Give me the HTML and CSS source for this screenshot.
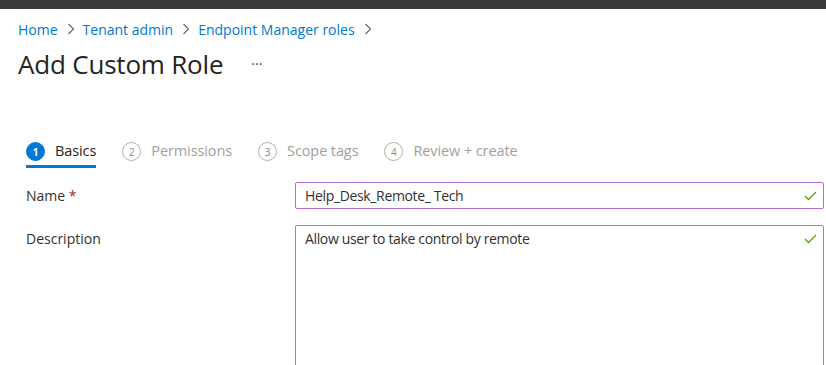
FILE: index.html
```html
<!DOCTYPE html>
<html>
<head>
<meta charset="utf-8">
<link rel="stylesheet" href="styles.css">
</head>
<body>
<div class="topbar"></div>
<main class="page">
  <nav class="crumbs">
    <a>Home</a><span class="sep"><svg width="8" height="12" viewBox="0 0 8 12"><path d="M1.5 1 L6.5 6 L1.5 11" fill="none" stroke="#666" stroke-width="1.1"/></svg></span>
    <a>Tenant admin</a><span class="sep"><svg width="8" height="12" viewBox="0 0 8 12"><path d="M1.5 1 L6.5 6 L1.5 11" fill="none" stroke="#666" stroke-width="1.1"/></svg></span>
    <a>Endpoint Manager roles</a><span class="sep"><svg width="8" height="12" viewBox="0 0 8 12"><path d="M1.5 1 L6.5 6 L1.5 11" fill="none" stroke="#666" stroke-width="1.1"/></svg></span>
  </nav>
  <div class="titlerow">
    <h1>Add Custom Role</h1>
    <span class="more">···</span>
  </div>
  <div class="steps">
    <div class="step active"><span class="num">1</span><span class="lbl">Basics</span></div>
    <div class="step"><span class="num">2</span><span class="lbl">Permissions</span></div>
    <div class="step"><span class="num">3</span><span class="lbl">Scope tags</span></div>
    <div class="step"><span class="num">4</span><span class="lbl">Review + create</span></div>
  </div>
  <div class="form">
    <div class="row">
      <label class="flabel">Name <span class="req">*</span></label>
      <div class="field input"><span>Help_Desk_Remote_ Tech</span>
        <svg class="check" width="13" height="10" viewBox="0 0 13 10"><path d="M1 5 L4.5 8.5 L12 1" fill="none" stroke="#57a300" stroke-width="1.3"/></svg></div>
    </div>
    <div class="row last">
      <label class="flabel">Description</label>
      <div class="field textarea"><span>Allow user to take control by remote</span>
        <svg class="check" width="13" height="10" viewBox="0 0 13 10"><path d="M1 5 L4.5 8.5 L12 1" fill="none" stroke="#57a300" stroke-width="1.3"/></svg></div>
    </div>
  </div>
</main>
</body>
</html>
```

FILE: styles.css
```css
* { box-sizing: border-box; }
html, body { margin: 0; padding: 0; background: #fff; overflow: hidden; }
body { font-family: "Open Sans", "Noto Sans", sans-serif; color: #323130; width: 826px; height: 365px; }
.topbar { height: 9px; background: #3b3a39; }
.page { padding: 0 0 0 18px; height: 356px; overflow: hidden; }
.crumbs { display: flex; align-items: center; height: 26px; margin-top: 7px; font-size: 14px; }
.crumbs a { color: #0078d4; }
.sep { display: inline-flex; margin: 0 8px 0 9px; }
.titlerow { display: flex; align-items: center; margin-top: 4px; height: 36px; }
h1 { margin: 0; font-weight: 400; font-size: 26px; color: #252423; letter-spacing: -0.2px; }
.more { margin-left: 28px; font-size: 14px; color: #444; margin-top: -2px; }
.steps { display: flex; margin-top: 55px; margin-left: 8px; height: 31px; }
.step { display: flex; align-items: flex-start; margin-right: 26px; border-bottom: 3px solid transparent; height: 31px; padding-top: 4px; }
.step.active { border-bottom-color: #0078d4; }
.num { width: 19px; height: 19px; border-radius: 50%; border: 1px solid #b3b0ad; color: #8a8886; font-size: 10px; display: flex; align-items: center; justify-content: center; margin-right: 10px; margin-top: 1px; }
.step.active .num { background: #0078d4; border-color: #0078d4; color: #fff; font-weight: 700; }
.lbl { font-size: 14.5px; color: #a19f9d; line-height: 20px; letter-spacing: -0.1px; }
.step.active .lbl { color: #252423; }
.form { margin-top: 14px; margin-left: 8px; }
.row { display: flex; margin-bottom: 16px; }
.flabel { width: 269px; font-size: 14px; color: #323130; padding-top: 4px; }
.req { color: #a4262c; }
.field { position: relative; width: 529px; border: 1px solid #b26fd2; border-radius: 2px; font-size: 14px; color: #323130; padding: 3px 30px 0 9px; letter-spacing: -0.35px; }
.input { height: 27px; }
.textarea { height: 160px; }
.check { position: absolute; right: 6px; top: 8px; }
```
